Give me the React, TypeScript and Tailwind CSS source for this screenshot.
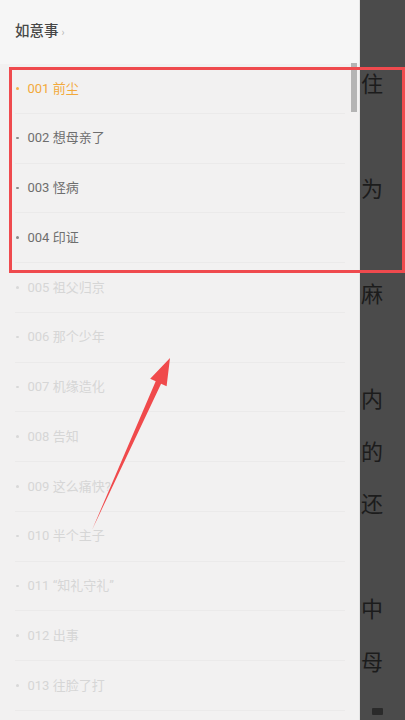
import React from "react";

const items = [
  "001 前尘",
  "002 想母亲了",
  "003 怪病",
  "004 印证",
  "005 祖父归京",
  "006 那个少年",
  "007 机缘造化",
  "008 告知",
  "009 这么痛快?",
  "010 半个主子",
  "011 “知礼守礼”",
  "012 出事",
  "013 往脸了打",
];

const side = ["住", "", "为", "", "麻", "", "内", "的", "还", "", "中", "母"];

export default function App() {
  return (
    <div
      className="relative flex h-[720px] w-[405px] overflow-hidden"
      style={{ fontFamily: 'Roboto, "Noto Sans CJK SC", sans-serif' }}
    >
      <div className="relative flex w-[360px] flex-col border-r border-[#e4e4e4] bg-[#f2f1f1]">
        <div className="flex h-[64px] items-center bg-[#f6f6f6] pl-[15px]">
          <span className="text-[14.5px] font-medium text-[#474747]">如意事</span>
          <span className="ml-[3px] text-[10px] text-[#b8b8b8]">›</span>
        </div>
        {items.map((t, i) => (
          <div
            key={t}
            className="mx-[15px] mr-[14px] flex h-[49.75px] shrink-0 items-center border-b border-[#ebeaea]"
          >
            <span
              className={
                "ml-[1px] h-[2.5px] w-[2.5px] rounded-full " +
                (i === 0 ? "bg-[#f3b04a]" : i < 4 ? "bg-[#8a8a8a]" : "bg-[#d8d8d8]")
              }
            />
            <span
              className={
                "ml-[9px] text-[13px] " +
                (i === 0 ? "text-[#f2a93b]" : i < 4 ? "text-[#6e6e6e]" : "text-[#d6d6d6]")
              }
            >
              {t}
            </span>
          </div>
        ))}
        <div className="absolute right-[2px] top-[63px] h-[49px] w-[6px] bg-[#b4b4b4]" />
      </div>
      <div className="flex flex-1 flex-col bg-[#4b4b4b] pt-[56px]">
        {side.map((c, i) => (
          <div
            key={i}
            className="flex h-[52.5px] items-center pl-[1px] text-[22px] font-normal leading-none text-[#1c1c1c]"
            style={{ fontFamily: '"Noto Sans CJK SC", sans-serif' }}
          >
            {c}
          </div>
        ))}
        <div className="mt-auto mb-[5px] ml-[12px] h-[7px] w-[11px] rounded-[1px] bg-[#2a2a2a]" />
      </div>

      <div className="pointer-events-none absolute left-[9px] top-[67px] h-[206px] w-[396px] border-[3px] border-[#ef4a4e]" />
      <svg
        className="pointer-events-none absolute left-0 top-0"
        width="405"
        height="720"
        viewBox="0 0 405 720"
      >
        <polygon
          points="92,530 155.7,381.3 150.2,378.8 170,358 166.6,386.2 161.1,383.7"
          fill="#f04a4c"
        />
      </svg>
    </div>
  );
}
